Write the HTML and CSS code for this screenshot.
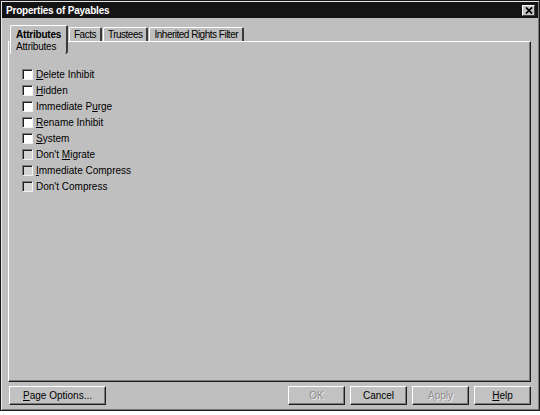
FILE: index.html
```html
<!DOCTYPE html>
<html lang="en">
<head>
    <meta charset="UTF-8">
    <title>Properties of Payables</title>
    <link rel="stylesheet" href="styles.css">
</head>
<body>
    <div class="window">
        <div class="titlebar">
            <span class="title">Properties of Payables</span>
            <span class="close">
                <svg width="9" height="8" viewBox="0 0 9 8"><path d="M1 0.5 L8 7.5 M8 0.5 L1 7.5" stroke="#000" stroke-width="2"/></svg>
            </span>
        </div>

        <div class="content">
            <div class="tabs">
                <div class="tab active">
                    <b>Attributes</b>
                    <span class="sub">Attributes</span>
                </div>
                <div class="tab">Facts</div>
                <div class="tab">Trustees</div>
                <div class="tab">Inherited Rights Filter</div>
            </div>

            <div class="panel">
                <ul class="attrs">
                    <li><span class="box"></span><span><u>D</u>elete Inhibit</span></li>
                    <li><span class="box"></span><span><u>H</u>idden</span></li>
                    <li><span class="box"></span><span>Immediate P<u>u</u>rge</span></li>
                    <li><span class="box"></span><span><u>R</u>ename Inhibit</span></li>
                    <li><span class="box"></span><span><u>S</u>ystem</span></li>
                    <li><span class="box off"></span><span>Don't <u>M</u>igrate</span></li>
                    <li><span class="box off"></span><span><u>I</u>mmediate Compress</span></li>
                    <li><span class="box off"></span><span>Don't Compress</span></li>
                </ul>
            </div>

            <div class="footer">
                <button class="btn wide"><u>P</u>age Options...</button>
                <div class="right">
                    <button class="btn" disabled>OK</button>
                    <button class="btn">Cancel</button>
                    <button class="btn" disabled>Apply</button>
                    <button class="btn"><u>H</u>elp</button>
                </div>
            </div>
        </div>
    </div>
</body>
</html>
```

FILE: styles.css
```css
html, body {
    margin: 0;
    padding: 0;
    background: #fff;
}
body {
    font-family: "Liberation Sans", Arial, sans-serif;
    font-size: 10px;
    color: #000;
}
.window {
    width: 540px;
    height: 411px;
    box-sizing: border-box;
    border: 1px solid #1a1a1a;
    padding: 1px;
    background: #bfbfbf;
    box-shadow: inset 1px 1px #e6e6e6, inset -1px -1px #7a7a7a;
    display: flex;
    flex-direction: column;
}
.titlebar {
    height: 16px;
    background: #141414;
    display: flex;
    align-items: center;
    justify-content: space-between;
    padding: 0 3px 0 4px;
}
.title {
    color: #fff;
    font-weight: bold;
    font-size: 10px;
    letter-spacing: -0.2px;
}
.close {
    width: 13px;
    height: 11px;
    box-sizing: border-box;
    background: #c4c4c4;
    border-top: 1px solid #fff;
    border-left: 1px solid #fff;
    border-right: 1px solid #404040;
    border-bottom: 1px solid #404040;
    display: flex;
    align-items: center;
    justify-content: center;
}
.close svg {
    width: 8px;
    height: 7px;
}
.content {
    flex: 1;
    display: flex;
    flex-direction: column;
    padding: 7px 7px 4px 6px;
}
.tabs {
    display: flex;
    align-items: flex-end;
    padding-left: 2px;
    height: 16px;
}
.tab {
    height: 14px;
    box-sizing: border-box;
    border-top: 1px solid #fff;
    border-left: 1px solid #fff;
    border-right: 2px solid #3a3a3a;
    border-radius: 2px 2px 0 0;
    padding: 0 4px;
    line-height: 13px;
    margin-right: 1px;
    white-space: nowrap;
    letter-spacing: -0.5px;
}
.tab.active {
    position: relative;
    z-index: 1;
    height: 29px;
    width: 58px;
    margin-bottom: -13px;
    background: #bfbfbf;
    padding: 3px 5px 0 5px;
    line-height: 12px;
    letter-spacing: -0.2px;
    border-bottom-right-radius: 3px;
}
.tab.active b {
    display: block;
}
.tab.active .sub {
    display: block;
}
.panel {
    flex: 1;
    border-top: 1px solid #fff;
    border-left: 1px solid #fff;
    border-right: 1px solid #1e1e1e;
    border-bottom: 1px solid #1e1e1e;
    box-shadow: inset -1px -1px #7a7a7a;
}
.attrs {
    list-style: none;
    margin: 0;
    padding: 24px 0 0 13px;
}
.attrs li {
    height: 16px;
    display: flex;
    align-items: center;
    gap: 3px;
}
.box {
    width: 11px;
    height: 11px;
    box-sizing: border-box;
    background: #fff;
    border-top: 1px solid #7a7a7a;
    border-left: 1px solid #7a7a7a;
    border-right: 1px solid #f4f4f4;
    border-bottom: 1px solid #f4f4f4;
    box-shadow: inset 1px 1px #1e1e1e;
}
.box.off {
    background: #d4d4d4;
}
.footer {
    display: flex;
    justify-content: space-between;
    padding: 4px 0 0 1px;
}
.right {
    display: flex;
    gap: 5px;
}
.btn {
    width: 57px;
    height: 19px;
    box-sizing: border-box;
    font-family: "Liberation Sans", Arial, sans-serif;
    font-size: 10px;
    color: #000;
    background: #c2c2c2;
    border-top: 1px solid #fff;
    border-left: 1px solid #fff;
    border-right: 1px solid #1e1e1e;
    border-bottom: 1px solid #1e1e1e;
    box-shadow: inset -1px -1px #7a7a7a;
    padding: 0;
    border-radius: 0;
}
.btn.wide {
    width: 97px;
}
.btn:disabled {
    color: #8c8c8c;
    text-shadow: 1px 1px #f0f0f0;
}
```
